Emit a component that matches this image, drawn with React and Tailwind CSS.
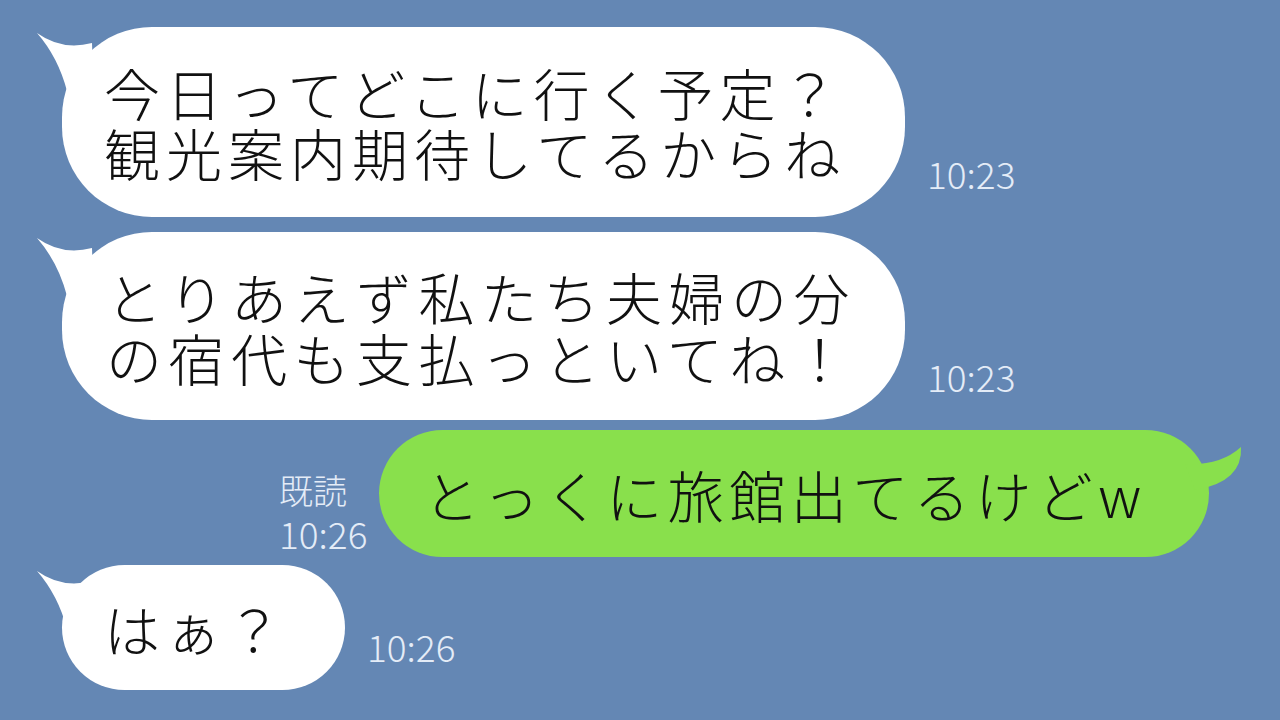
import React from "react";

const jp = { fontFamily: '"Noto Sans CJK JP", "Noto Sans", sans-serif' };

function LeftTail() {
  return (
    <svg className="absolute left-[-28px] top-[2px]" width="70" height="80" viewBox="0 0 70 80">
      <path d="M3 4 Q 28 22 58 14 L 60 70 L 33 62 Q 24 28 3 4 Z" fill="#ffffff" />
    </svg>
  );
}

function RightTail() {
  return (
    <svg className="absolute right-[-36px] top-[14px]" width="60" height="60" viewBox="0 0 60 60">
      <path d="M0 20 Q 35 22 56 3 Q 58 38 10 46 Z" fill="#89e04c" />
    </svg>
  );
}

function Time({ children, className = "" }) {
  return (
    <div className={"text-[37px] leading-none font-light text-[#e4ecf7] " + className} style={jp}>
      {children}
    </div>
  );
}

export default function App() {
  return (
    <div className="w-[1280px] h-[720px] bg-[#6487b4] overflow-hidden flex flex-col pt-[27px]" style={jp}>
      <div className="flex items-end ml-[62px]">
        <div className="relative w-[843px] h-[190px] bg-white rounded-[90px] flex flex-col justify-center pl-[42px]">
          <LeftTail />
          <div className="relative text-[56px] leading-[60px] tracking-[6px] font-light text-[#111]">
            <div>今日ってどこに行く予定？</div>
            <div>観光案内期待してるからね</div>
          </div>
        </div>
        <Time className="ml-[22px] mb-[25px]">10:23</Time>
      </div>

      <div className="flex items-end ml-[62px] mt-[15px]">
        <div className="relative w-[843px] h-[188px] bg-white rounded-[90px] flex flex-col justify-center pl-[44px]">
          <LeftTail />
          <div className="relative text-[56px] leading-[61px] tracking-[6.5px] font-light text-[#111]">
            <div>とりあえず私たち夫婦の分</div>
            <div>の宿代も支払っといてね！</div>
          </div>
        </div>
        <Time className="ml-[22px] mb-[25px]">10:23</Time>
      </div>

      <div className="flex items-end ml-[279px] mt-[10px]">
        <div className="flex flex-col mb-[5px] gap-[8px] text-[37px] leading-none font-light text-[#e4ecf7]">
          <div className="text-[34px]">既読</div>
          <div>10:26</div>
        </div>
        <div className="relative ml-[12px] w-[830px] h-[127px] bg-[#89e04c] rounded-full flex items-center pl-[44px]">
          <RightTail />
          <div className="relative text-[56px] leading-none tracking-[5.5px] font-light text-[#111]">
            とっくに旅館出てるけどw
          </div>
        </div>
      </div>

      <div className="flex items-end ml-[62px] mt-[8px]">
        <div className="relative w-[283px] h-[125px] bg-white rounded-full flex items-center pl-[42px]">
          <LeftTail />
          <div className="relative text-[56px] leading-none tracking-[5px] font-light text-[#111]">
            はぁ？
          </div>
        </div>
        <Time className="ml-[22px] mb-[25px]">10:26</Time>
      </div>
    </div>
  );
}
